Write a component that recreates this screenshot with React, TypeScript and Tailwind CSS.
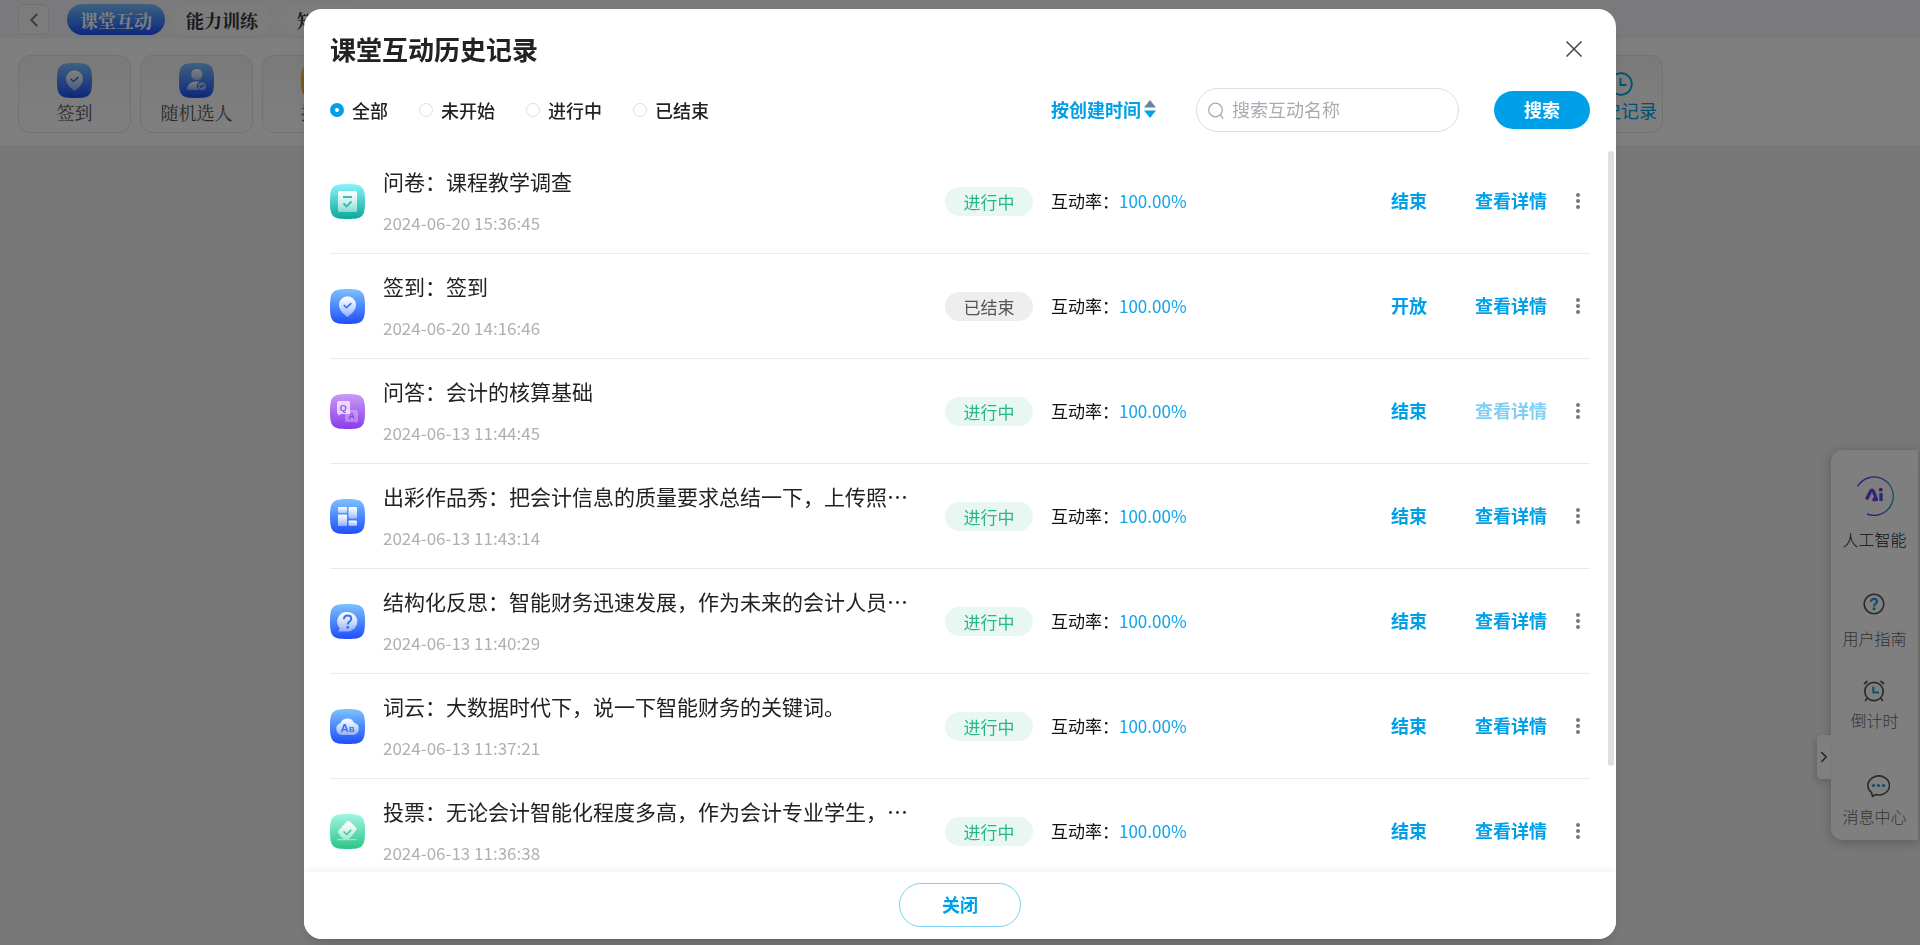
import { useState } from 'react';
import type { ReactNode } from 'react';
import clsx from 'clsx';
import { ChevronLeft, ChevronRight } from 'lucide-react';

type IconKind = 'survey' | 'sign' | 'qa' | 'works' | 'think' | 'cloud' | 'vote' | 'pick' | 'rush';

interface HistoryRecord {
  id: number;
  icon: IconKind;
  title: string;
  time: string;
  status: string;
  action: string;
  detailDisabled?: boolean;
}

const records: HistoryRecord[] = [
  { id: 1, icon: 'survey', title: '问卷：课程教学调查', time: '2024-06-20 15:36:45', status: '进行中', action: '结束' },
  { id: 2, icon: 'sign', title: '签到：签到', time: '2024-06-20 14:16:46', status: '已结束', action: '开放' },
  { id: 3, icon: 'qa', title: '问答：会计的核算基础', time: '2024-06-13 11:44:45', status: '进行中', action: '结束', detailDisabled: true },
  { id: 4, icon: 'works', title: '出彩作品秀：把会计信息的质量要求总结一下，上传照…', time: '2024-06-13 11:43:14', status: '进行中', action: '结束' },
  { id: 5, icon: 'think', title: '结构化反思：智能财务迅速发展，作为未来的会计人员…', time: '2024-06-13 11:40:29', status: '进行中', action: '结束' },
  { id: 6, icon: 'cloud', title: '词云：大数据时代下，说一下智能财务的关键词。', time: '2024-06-13 11:37:21', status: '进行中', action: '结束' },
  { id: 7, icon: 'vote', title: '投票：无论会计智能化程度多高，作为会计专业学生，…', time: '2024-06-13 11:36:38', status: '进行中', action: '结束' },
];

const filters = ['全部', '未开始', '进行中', '已结束'];

const tileColors: Record<IconKind, [string, string]> = {
  survey: ['#8cf3fb', '#0aa898'],
  sign: ['#7cc2ff', '#1f4dfa'],
  qa: ['#c99bf8', '#8a3be8'],
  works: ['#7cc2ff', '#1f4dfa'],
  think: ['#7cc2ff', '#1f4dfa'],
  cloud: ['#7cc2ff', '#1f4dfa'],
  vote: ['#a2f5e6', '#2bc486'],
  pick: ['#7cc2ff', '#1f4dfa'],
  rush: ['#ffc955', '#f59a1a'],
};

function TileGlyph({ kind }: { kind: IconKind }) {
  const fill = `url(#glyph-${kind})`;
  switch (kind) {
    case 'survey':
      return (
        <>
          <rect x="8" y="7" width="19" height="21" rx="1.5" fill={fill} />
          <path d="M13 13h9M13.5 19.5l3 3 5-5" fill="none" stroke="#35bdb6" strokeWidth="1.8" />
        </>
      );
    case 'sign':
      return (
        <>
          <path d="M17.5 28c-3.5-2.7-8.5-6.5-8.5-12a8.5 8.8 0 0 1 17 0c0 5.5-5 9.3-8.5 12Z" fill={fill} />
          <path d="M13.7 16l2.8 2.7 4.8-4.5" fill="none" stroke="#3c74e8" strokeWidth="1.6" />
        </>
      );
    case 'qa':
      return (
        <>
          <path d="M16.5 16h10a1.5 1.5 0 0 1 1.5 1.5v9.5l-1 2-2-1h-8.5a1.5 1.5 0 0 1-1.5-1.5v-9Z" fill="#fff" fillOpacity=".3" />
          <path d="M8.5 7h10a1.5 1.5 0 0 1 1.5 1.5v10a1.5 1.5 0 0 1-1.5 1.5h-8L9 22l-1-2a1.5 1.5 0 0 1-1-1.5v-10A1.5 1.5 0 0 1 8.5 7Z" fill="#fff" fillOpacity=".7" />
          <text x="13.3" y="16.6" fontSize="9" fontWeight="700" textAnchor="middle" fill="#9350e0" fontFamily="Liberation Sans">Q</text>
          <text x="21.7" y="25.4" fontSize="9" fontWeight="700" textAnchor="middle" fill="#8a3fdc" fontFamily="Liberation Sans">A</text>
        </>
      );
    case 'works':
      return (
        <g fill={fill}>
          <rect x="8" y="8" width="9" height="6" rx="1" />
          <rect x="8" y="15.5" width="9" height="11.5" rx="1" />
          <rect x="18.5" y="8" width="8.5" height="11.5" rx="1" />
          <rect x="18.5" y="21.5" width="8.5" height="5.5" rx="1" />
        </g>
      );
    case 'think':
      return (
        <>
          <path d="M17.7 8a9.7 9.7 0 0 1 0 19.4H8.5l1.2-3.2A9.7 9.7 0 0 1 17.7 8Z" fill={fill} />
          <path d="M14 15.2c0-5 7.3-4.6 7.3-.4 0 2.7-3.6 2.7-3.6 5.7" fill="none" stroke="#3c6ff0" strokeWidth="2" />
          <circle cx="17.7" cy="23.3" r="1.4" fill="#3c6ff0" />
        </>
      );
    case 'cloud':
      return (
        <>
          <path d="M12 26a6 6 0 0 1-1.5-11.7 7.3 7.3 0 0 1 13.6-.5A6.2 6.2 0 0 1 23 26Z" fill={fill} />
          <text x="10.5" y="23" fontSize="11.5" fontWeight="700" fill="#3c6ff0" fontFamily="Liberation Sans">A</text>
          <text x="19" y="23" fontSize="8" fontWeight="700" fill="#3c6ff0" fontFamily="Liberation Sans">B</text>
        </>
      );
    case 'vote':
      return (
        <>
          <path d="M16.8 7.6q1.7-1.2 3.2.2l6 5.5q1.2 1.2.4 2.8L20 24q-.7 1-2 1h8.5v1.3h-19V25h6.5q-1 0-1.8-1L8.600 19.500q-.9-1.300 0-3Z" fill={fill} />
          <path d="M13.5 17.5l3.2 3 4.600-4.800" fill="none" stroke="#3fcb99" strokeWidth="1.6" />
        </>
      );
    case 'pick':
      return (
        <>
          <circle cx="17.8" cy="11.5" r="5.7" fill={fill} />
          <path d="M8 27c0-6 4-8.5 9.8-8.5 4 0 7 1.5 8.2 4.5v4Z" fill={fill} />
          <circle cx="23" cy="23" r="4.7" fill="#9dbcfb" stroke="#3564e8" strokeWidth="1" />
          <path d="M20.8 22.8l1.7 1.6 2.8-2.8" fill="none" stroke="#3564e8" strokeWidth="1.2" />
        </>
      );
    default:
      return <circle cx="17.5" cy="17.5" r="8" fill={fill} />;
  }
}

function TileIcon({ kind }: { kind: IconKind }) {
  const [from, to] = tileColors[kind];
  return (
    <svg viewBox="0 0 35 35" className="size-[35px] shrink-0" aria-hidden="true">
      <defs>
        <linearGradient id={`tile-${kind}`} x1="0" y1="0" x2="0" y2="1">
          <stop offset="0" stopColor={from} />
          <stop offset="1" stopColor={to} />
        </linearGradient>
        <linearGradient id={`glyph-${kind}`} x1="0" y1="0" x2="0" y2="1">
          <stop offset="0" stopColor="#fff" />
          <stop offset="1" stopColor="#fff" stopOpacity=".45" />
        </linearGradient>
      </defs>
      <path d="M0 17.5C0 2.5 2.5 0 17.5 0S35 2.5 35 17.5 32.5 35 17.5 35 0 32.5 0 17.5Z" fill={`url(#tile-${kind})`} />
      <TileGlyph kind={kind} />
    </svg>
  );
}

function ToolCard({ icon, label }: { icon: IconKind; label: string }) {
  return (
    <button className="w-[113px] h-[78px] flex flex-col items-center pt-[7px] gap-[2px] rounded-xl border border-[#e4e4e4] bg-gradient-to-b from-[#f4f4f4] to-white text-lg leading-6 text-[#555]">
      <TileIcon kind={icon} />
      {label}
    </button>
  );
}

function TopArea() {
  return (
    <div className="[font-family:'Noto_Serif_CJK_SC','Noto_Serif_SC',serif]">
      <nav className="h-[39px] flex items-center gap-2 px-[18px] bg-[#f4f4f8]">
        <button aria-label="返回" className="size-[31px] mr-[10px] flex items-center justify-center rounded-md border border-[#e2e2e6] bg-[#f9f9fb] text-[#777]">
          <ChevronLeft size={22} strokeWidth={2} />
        </button>
        <button className="h-[31px] w-[98px] rounded-full bg-gradient-to-b from-[#7cc2ff] to-[#1f4dfa] text-white text-lg font-bold leading-6">
          课堂互动
        </button>
        <button className="h-[31px] w-[98px] rounded-full bg-[#f8f8fb] text-[#333] text-lg font-bold leading-6">能力训练</button>
        <button className="h-[31px] w-[83px] px-[18px] text-left rounded-full bg-[#f8f8fb] text-[#333] text-lg font-bold leading-6">知</button>
      </nav>
      <div className="h-[106px] pt-4 pl-[18px] pr-[257px] flex justify-between bg-white">
        <div className="flex gap-[9px]">
          <ToolCard icon="sign" label="签到" />
          <ToolCard icon="pick" label="随机选人" />
          <ToolCard icon="rush" label="抢答" />
        </div>
        <button className="w-[84px] h-[78px] pt-4 flex flex-col items-center gap-[2px] rounded-xl border border-[#e4e4e4] bg-gradient-to-b from-[#f4f4f4] to-white [font-family:'Noto_Sans_CJK_SC',sans-serif] text-lg leading-6 text-[#00a0e9]">
          <svg viewBox="0 0 24 24" className="size-6 shrink-0" fill="none" stroke="currentColor" strokeWidth="1.8">
            <circle cx="12" cy="12" r="10.8" />
            <path d="M11.5 6v7h6" />
          </svg>
          <span className="whitespace-nowrap">历史记录</span>
        </button>
      </div>
    </div>
  );
}

function SideItem({ label, className, children }: { label: string; className?: string; children: ReactNode }) {
  return (
    <button className={clsx('flex flex-col items-center text-base leading-6 font-light', className)}>
      {children}
      {label}
    </button>
  );
}

function SidePanel() {
  return (
    <aside className="absolute right-[2px] top-[450px] w-[87px] flex flex-col items-center pt-[26px] pb-3 bg-white rounded-l-xl shadow-[0_2px_12px_rgba(0,0,0,0.25)]">
      <button aria-label="收起" className="absolute right-full top-[285px] w-[14px] h-11 flex items-center justify-center rounded-l bg-white text-[#444] shadow-[-2px_3px_6px_rgba(0,0,0,0.15)]">
        <ChevronRight size={18} strokeWidth={2} className="shrink-0" />
      </button>
      <SideItem label="人工智能" className="gap-[11px] text-[#222]">
        <svg viewBox="0 0 40 40" className="size-10">
          <defs>
            <linearGradient id="ai-ring" x1="0" y1="0" x2="1" y2="0">
              <stop offset="0" stopColor="#6a3df0" />
              <stop offset=".5" stopColor="#8a30e8" />
              <stop offset="1" stopColor="#1cb5d8" />
            </linearGradient>
            <linearGradient id="ai-text" x1="0" y1="1" x2="1" y2="0">
              <stop offset="0" stopColor="#9a2be8" />
              <stop offset="1" stopColor="#4a58f0" />
            </linearGradient>
          </defs>
          <path d="M3.5 10.5A19.2 19.2 0 1 1 13 38" fill="none" stroke="url(#ai-ring)" strokeWidth="1.4" />
          <path d="M12.5 23.5l4-8q1.5-2.5 3 0l3 8h-4" fill="none" stroke="url(#ai-text)" strokeWidth="3.4" strokeLinejoin="round" />
          <path d="M27 17v8" stroke="#4a58f0" strokeWidth="3.4" />
          <circle cx="26.8" cy="13.700" r="2" fill="#8a30e8" />
        </svg>
      </SideItem>
      <SideItem label="用户指南" className="mt-[42px] gap-[11px] text-[#666]">
        <svg viewBox="0 0 22 22" className="size-[22px]" fill="none">
          <circle cx="11" cy="11" r="9.8" stroke="#555" strokeWidth="1.6" />
          <path d="M8 8.8c0-4 6-3.6 6-.3 0 2.200-3 2.300-3 4.700" stroke="#1a9fdc" strokeWidth="2.2" />
          <circle cx="11" cy="15.8" r="1.5" fill="#1a9fdc" />
        </svg>
      </SideItem>
      <SideItem label="倒计时" className="mt-[30px] gap-[6px] text-[#666]">
        <svg viewBox="0 0 22 22" className="size-[22px]" fill="none" stroke="#555" strokeWidth="1.7">
          <circle cx="11" cy="11.5" r="9.2" />
          <path d="M1 4l3.5-3M21 4l-3.5-3M4.5 18L2 21M17.5 18l2.5 3" />
          <path d="M10.3 6.5v6h5.7" stroke="#1a9fdc" strokeWidth="2" />
        </svg>
      </SideItem>
      <SideItem label="消息中心" className="mt-[42px] gap-[6px] text-[#666]">
        <svg viewBox="0 0 24 24" className="size-6 ml-2" fill="none">
          <path d="M5.5 18.5A10.8 9.5 0 1 1 9.5 20.5L6.500 22.500Z" stroke="#555" strokeWidth="1.6" strokeLinejoin="round" />
          <g fill="#1a9fdc">
            <circle cx="7.5" cy="11.5" r="1.6" />
            <circle cx="12.5" cy="11.5" r="1.6" />
            <circle cx="17.5" cy="11.5" r="1.6" />
          </g>
        </svg>
      </SideItem>
    </aside>
  );
}

function RecordRow({ record }: { record: HistoryRecord }) {
  const ended = record.status === '已结束';
  return (
    <li className="h-[105px] flex items-center border-b border-[#ebebeb]">
      <div className="w-[615px] flex items-center gap-[18px]">
        <TileIcon kind={record.icon} />
        <div className="min-w-0 flex flex-col gap-[17px]">
          <h3 className="text-[21px] leading-[26px] text-[#222] whitespace-nowrap">{record.title}</h3>
          <time className="text-[#b0b0b0] leading-6">{record.time}</time>
        </div>
      </div>
      <span
        className={clsx(
          'w-[88px] h-[29px] leading-[29px] text-center rounded-full',
          ended ? 'bg-[#eeeeee] text-[#555]' : 'bg-[#e8f7f3] text-[#26b987]'
        )}
      >
        {record.status}
      </span>
      <p className="ml-[18px] text-[#111]">
        互动率：<span className="text-[#12a5ea]">100.00%</span>
      </p>
      <div className="ml-auto pb-[2px] flex items-center text-[#00a0e9] text-lg leading-6 font-bold">
        <button className="mr-12">{record.action}</button>
        <button disabled={record.detailDisabled} className="mr-[19px] disabled:opacity-50">查看详情</button>
      </div>
      <button aria-label="更多" className="w-6 h-6 flex items-center justify-center">
        <svg viewBox="0 0 4 16" className="w-1 h-4" fill="#777">
          <circle cx="2" cy="2" r="2" />
          <circle cx="2" cy="8" r="2" />
          <circle cx="2" cy="14" r="2" />
        </svg>
      </button>
    </li>
  );
}

function HistoryDialog() {
  const [filter, setFilter] = useState('全部');
  const [keyword, setKeyword] = useState('');

  return (
    <section
      role="dialog"
      aria-labelledby="history-title"
      className="w-full max-w-[1312px] h-full flex flex-col bg-white rounded-[18px] overflow-hidden shadow-lg text-[#222]"
    >
      <header className="px-[26px] pt-6 flex items-center justify-between">
        <h2 id="history-title" className="text-[26px] leading-8 font-bold">课堂互动历史记录</h2>
        <button aria-label="退出" className="size-6 mr-1 flex items-center justify-center text-[#444]">
          <svg viewBox="0 0 16 16" className="size-4" fill="none" stroke="currentColor" strokeWidth="1.5">
            <path d="M.5.5l15 15M15.5.5l-15 15" />
          </svg>
        </button>
      </header>

      <div className="px-[26px] pt-[23px] pb-[17px] flex items-center text-lg leading-6">
        <div className="flex gap-[31px]">
          {filters.map((name) => (
            <label key={name} className="flex items-center gap-2 font-medium">
              <input
                type="radio"
                name="status"
                checked={filter === name}
                onChange={() => setFilter(name)}
                className="appearance-none size-[14px] rounded-full border border-[#dcdfe6] bg-white checked:border-[5px] checked:border-[#00a0e9]"
              />
              {name}
            </label>
          ))}
        </div>
        <button className="ml-auto pb-[2px] flex items-center gap-[3px] font-bold text-[#00a0e9]">
          按创建时间
          <svg viewBox="0 0 12 18" className="w-3 h-[18px]">
            <path d="M6 0l6 7.5H0Z" fill="#6b8596" />
            <path d="M6 18l6-7.5H0Z" fill="#00a0e9" />
          </svg>
        </button>
        <div className="ml-10 w-[263px] h-11 flex items-center gap-2 pl-[11px] pr-4 rounded-full border border-[#dcdce6]">
          <svg viewBox="0 0 16 17" className="w-4 h-[17px] shrink-0" fill="none" stroke="#a8abb2" strokeWidth="1.3">
            <circle cx="7.5" cy="8" r="6.8" />
            <path d="M12.5 13l2.5 3.5" />
          </svg>
          <input
            aria-label="搜索互动名称"
            placeholder="搜索互动名称"
            value={keyword}
            onChange={(e) => setKeyword(e.target.value)}
            className="min-w-0 flex-1 pb-[2px] outline-none placeholder:text-[#a8abb2]"
          />
        </div>
        <button className="ml-[35px] w-24 h-[38px] pb-[2px] rounded-full bg-[#00a0e9] text-white font-bold">搜索</button>
      </div>

      <div className="relative flex-1 min-h-0">
        <ul className="h-full px-[26px] overflow-y-auto [scrollbar-width:none]">
          {records.map((record) => (
            <RecordRow key={record.id} record={record} />
          ))}
        </ul>
        <div className="absolute right-[2px] top-[2px] w-[6px] h-[85%] rounded-full bg-[#dddee0]" />
      </div>

      <footer className="relative pt-[11px] pb-3 flex justify-center bg-white shadow-[0_-2px_8px_rgba(0,0,0,0.06)]">
        <button className="w-[122px] h-11 pb-[2px] rounded-full border border-[#7fcff4] text-lg leading-6 font-bold text-[#00a0e9]">关闭</button>
      </footer>
    </section>
  );
}

export default function App() {
  return (
    <div className="relative h-screen overflow-hidden bg-[#f0f0f0] [font-family:'Noto_Sans_CJK_SC',sans-serif] text-[17px] leading-6">
      <TopArea />
      <SidePanel />
      <div className="fixed inset-0 flex justify-center pt-[9px] pb-[6px] bg-black/50">
        <HistoryDialog />
      </div>
    </div>
  );
}
